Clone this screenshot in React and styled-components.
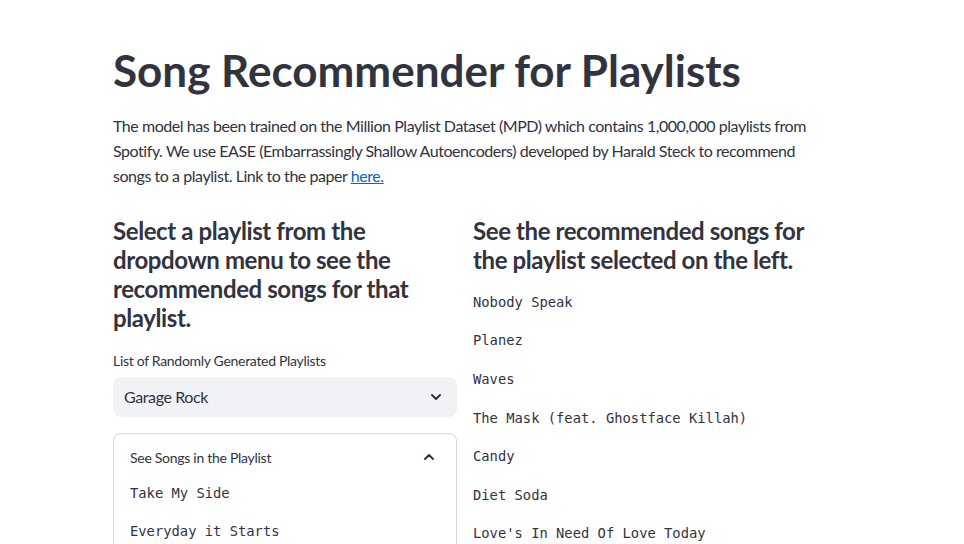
import React from 'react';
import styled, { createGlobalStyle } from 'styled-components';

const GlobalStyle = createGlobalStyle`
  html, body {
    margin: 0;
    padding: 0;
    background: #ffffff;
    overflow: hidden;
  }
  body {
    font-family: "Lato", "Noto Sans", sans-serif;
    color: #31333f;
  }
`;

const Page = styled.main`
  width: 704px;
  height: 500px;
  padding: 44px 0 0 113px;
  overflow: hidden;
`;

const Title = styled.h1`
  margin: 0;
  font-size: 44px;
  line-height: 52.8px;
  font-weight: 700;
`;

const Intro = styled.p`
  margin: 16px 0 0;
  font-size: 16px;
  line-height: 25px;
  letter-spacing: -0.45px;
`;

const Link = styled.a`
  color: #0068c9;
  text-decoration: underline;
`;

const Columns = styled.div`
  display: grid;
  grid-template-columns: 344px 344px;
  column-gap: 16px;
  margin-top: 28px;
`;

const Column = styled.section`
  display: flex;
  flex-direction: column;
`;

const SubHeading = styled.h3`
  margin: 0;
  font-size: 24px;
  line-height: 29px;
  font-weight: 700;
  letter-spacing: -0.4px;
`;

const Label = styled.label`
  margin-top: 18px;
  font-size: 14px;
  line-height: 21px;
  letter-spacing: -0.3px;
`;

const Select = styled.div`
  margin-top: 6px;
  height: 40px;
  border-radius: 8px;
  background: #f0f2f6;
  display: flex;
  align-items: center;
  justify-content: space-between;
  padding: 0 14px 0 11px;
  font-size: 16px;
  letter-spacing: -0.4px;
`;

const Expander = styled.div`
  margin-top: 16px;
  border: 1px solid #d6d6d9;
  border-radius: 8px;
  padding: 0 16px;
  height: 160px;
`;

const ExpanderHeader = styled.div`
  display: flex;
  align-items: center;
  justify-content: space-between;
  height: 47px;
  font-size: 14px;
  letter-spacing: -0.28px;
  padding-right: 4px;
`;

const SongList = styled.div`
  display: flex;
  flex-direction: column;
  gap: 16.6px;
  margin-top: ${(p) => p.$offset}px;
`;

const Song = styled.div`
  font-family: "DejaVu Sans Mono", "Liberation Mono", monospace;
  font-size: 13.8px;
  line-height: 22px;
  white-space: pre;
`;

const Chevron = ({ up }) => (
  <svg width="14" height="14" viewBox="0 0 14 14" fill="none">
    <path
      d={up ? 'M3 9 L7 5 L11 9' : 'M3 5 L7 9 L11 5'}
      stroke="#31333f"
      strokeWidth="2"
      strokeLinecap="round"
      strokeLinejoin="round"
    />
  </svg>
);

const playlistSongs = ['Take My Side', 'Everyday it Starts', 'Fire', 'Gimme Danger'];

const recommended = [
  'Nobody Speak',
  'Planez',
  'Waves',
  'The Mask (feat. Ghostface Killah)',
  'Candy',
  'Diet Soda',
  "Love's In Need Of Love Today",
];

export default function App() {
  return (
    <>
      <GlobalStyle />
      <Page>
        <Title>Song Recommender for Playlists</Title>
        <Intro>
          The model has been trained on the Million Playlist Dataset (MPD) which contains 1,000,000 playlists from
          Spotify. We use EASE (Embarrassingly Shallow Autoencoders) developed by Harald Steck to recommend
          songs to a playlist. Link to the paper <Link href="#">here.</Link>
        </Intro>
        <Columns>
          <Column>
            <SubHeading>
              Select a playlist from the dropdown menu to see the recommended songs for that playlist.
            </SubHeading>
            <Label>List of Randomly Generated Playlists</Label>
            <Select>
              <span>Garage Rock</span>
              <Chevron />
            </Select>
            <Expander>
              <ExpanderHeader>
                <span>See Songs in the Playlist</span>
                <Chevron up />
              </ExpanderHeader>
              <SongList $offset={1}>
                {playlistSongs.map((s) => (
                  <Song key={s}>{s}</Song>
                ))}
              </SongList>
            </Expander>
          </Column>
          <Column>
            <SubHeading>See the recommended songs for the playlist selected on the left.</SubHeading>
            <SongList $offset={17}>
              {recommended.map((s) => (
                <Song key={s}>{s}</Song>
              ))}
            </SongList>
          </Column>
        </Columns>
      </Page>
    </>
  );
}
